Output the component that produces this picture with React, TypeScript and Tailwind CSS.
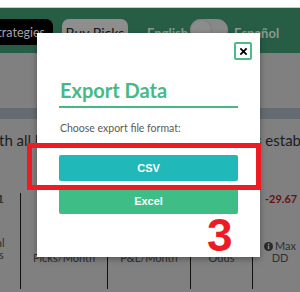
import React from 'react';

const lato = { fontFamily: 'Lato, "Noto Sans", sans-serif' };
const arial = { fontFamily: '"Liberation Sans", Arial, sans-serif' };

function InfoDot() {
  return (
    <svg width="9" height="9" viewBox="0 0 16 16" className="inline-block mr-[2px] -mt-[2px]">
      <circle cx="8" cy="8" r="8" fill="#2a2a2a" />
      <rect x="6.8" y="6.6" width="2.6" height="6.2" fill="#8a8a8a" />
      <circle cx="8.1" cy="4.3" r="1.5" fill="#8a8a8a" />
    </svg>
  );
}

function Page() {
  return (
    <div className="w-[300px] h-[292px] bg-[#808080]" style={lato}>
      <div className="h-[8px] bg-white border-b border-[#c6cad0]" />
      <div className="h-[45px] bg-[#275d45] flex items-start pt-[11px] whitespace-nowrap">
        <div className="-ml-[10px] w-[63px] shrink-0 overflow-hidden h-[26px] pr-[8px] rounded-[7px] bg-black text-[#a3a3a3] text-[12.5px] leading-[26px] pt-[1px] flex justify-end">
          Strategies
        </div>
        <div className="ml-[9px] w-[66px] shrink-0 h-[26px] rounded-[7px] bg-[#8e8e8e] text-[#161616] text-[14px] leading-[26px] pt-[1px] text-center">
          Buy Picks
        </div>
        <div className="ml-[19px] w-[37px] shrink-0 text-[13px] font-bold text-[#8a9a90] leading-[26px] pt-[1px]">English</div>
        <div className="ml-[6px] w-[38px] shrink-0 h-[22px] rounded-full bg-[#888888] flex">
          <div className="w-[22px] h-[22px] rounded-full bg-[#8c8c8c] border border-[#7d7d7d]" />
        </div>
        <div className="ml-[6px] text-[13px] font-bold text-[#8a9a90] leading-[26px] pt-[1px]">Español</div>
      </div>
      <div className="h-[55px]" />
      <div className="h-[11px] bg-[#646b73]" />
      <div className="flex justify-between items-start pt-[10px] h-[74px] text-[15px] text-[#1c1c1c] whitespace-nowrap overflow-hidden">
        <span className="-ml-[1px]">th all hi</span>
        <span className="-mr-[1px]">s estab</span>
      </div>
      <div className="grid grid-cols-[21px_87px_83px_62px_47px] h-[96px] text-[11px] leading-[12px] text-[#303030]">
        <div className="border-r border-[#111] flex flex-col justify-between pb-[28px] overflow-hidden">
          <div className="font-bold text-[12px] -ml-[3px]">1</div>
          <div className="-ml-[21px] w-[28px] text-center">Total<br />Bets</div>
        </div>
        <div className="border-r border-[#111] flex flex-col justify-end pb-[25px] text-center">
          <div>Avg<br />Picks/Month</div>
        </div>
        <div className="border-r border-[#111] flex flex-col justify-end pb-[25px] text-center">
          <div>Avg<br />P&amp;L/Month</div>
        </div>
        <div className="border-r border-[#111] flex flex-col justify-end pb-[25px] text-center">
          <div>Avg<br />Odds</div>
        </div>
        <div className="flex flex-col justify-between pb-[25px] text-center">
          <div className="font-bold text-[11px] text-[#6a1010] pl-[12px] text-left">-29.67</div>
          <div className="pl-[7px]"><InfoDot />Max<br />DD</div>
        </div>
      </div>
    </div>
  );
}

function ExportModal() {
  return (
    <div className="absolute left-[37px] top-[33px] w-[223px] h-[224px] bg-white shadow-[0_2px_6px_rgba(0,0,0,0.35)] flex flex-col px-[22px]" style={lato}>
      <button className="self-end -mr-[14px] mt-[9px] w-[18px] h-[18px] border-2 border-[#4cbb8a] rounded-[2px] flex items-center justify-center">
        <svg width="9" height="9" viewBox="0 0 10 10">
          <path d="M1.5 1.5 L8.5 8.5 M8.5 1.5 L1.5 8.5" stroke="#000" strokeWidth="2" />
        </svg>
      </button>
      <h2 className="mt-[17px] text-[20px] leading-[26px] font-bold text-[#48b986] pb-[3px] border-b-2 border-[#48b986] pl-[1px]">
        Export Data
      </h2>
      <p className="mt-[12px] text-[10.5px] leading-[16px] text-[#5a5a5a] pl-[1px]">Choose export file format:</p>
      <button className="mt-[19px] h-[26px] rounded-[2px] bg-[#21b8b9] text-white text-[11px] font-bold" style={arial}>
        CSV
      </button>
      <button className="mt-[7px] h-[26px] rounded-[2px] bg-[#3fbd86] text-white text-[11px] font-bold" style={arial}>
        Excel
      </button>
    </div>
  );
}

export default function App() {
  return (
    <div className="relative w-[300px] h-[292px] overflow-hidden">
      <Page />
      <ExportModal />
      <div className="absolute left-[27px] top-[143px] w-[234px] h-[47px] border-[5px] border-[#ed1c24]" />
      <div className="absolute left-[207px] top-[212px] text-[46px] leading-[46px] font-bold text-[#ed1c24]" style={arial}>
        3
      </div>
    </div>
  );
}
